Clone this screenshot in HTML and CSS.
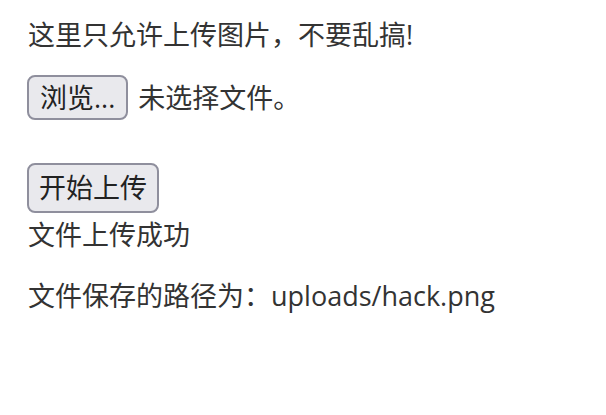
FILE: index.html
```html
<!DOCTYPE html>
<html lang="zh-CN">
<head>
<meta charset="utf-8">
<title>上传</title>
<link rel="stylesheet" href="styles.css">
</head>
<body>
<div class="page">
  <p class="notice">这里只允许上传图片，不要乱搞!</p>
  <form class="upload">
    <div class="file-row">
      <button type="button" class="btn btn-browse">浏览...</button>
      <span class="file-name">未选择文件。</span>
    </div>
    <button type="button" class="btn btn-submit">开始上传</button>
  </form>
  <div class="result">文件上传成功</div>
  <p class="path">文件保存的路径为：uploads/hack.png</p>
</div>
</body>
</html>
```
FILE: styles.css
```css
html, body {
  margin: 0;
  padding: 0;
  background: #fff;
}
.page {
  padding: 17px 0 0 28px;
  font-family: "Open Sans", "Noto Sans CJK SC", sans-serif;
  font-size: 27px;
  line-height: 36px;
  color: #333;
}
.notice {
  margin: 0;
}
.upload {
  margin: 22px 0 0 -1px;
  display: flex;
  flex-direction: column;
  align-items: flex-start;
  gap: 43px;
}
.file-row {
  display: flex;
  align-items: center;
  gap: 10px;
}
.btn {
  font-family: inherit;
  font-size: 27px;
  line-height: 36px;
  color: #222;
  background: #e9e9ed;
  border: 2px solid #8f8f9d;
  border-radius: 8px;
  margin: 0;
}
.btn-browse {
  padding: 3px 11px 2px;
}
.btn-submit {
  padding: 5px 10px;
}
.result {
  margin-top: 4px;
}
.path {
  margin: 25px 0 0;
}
```
